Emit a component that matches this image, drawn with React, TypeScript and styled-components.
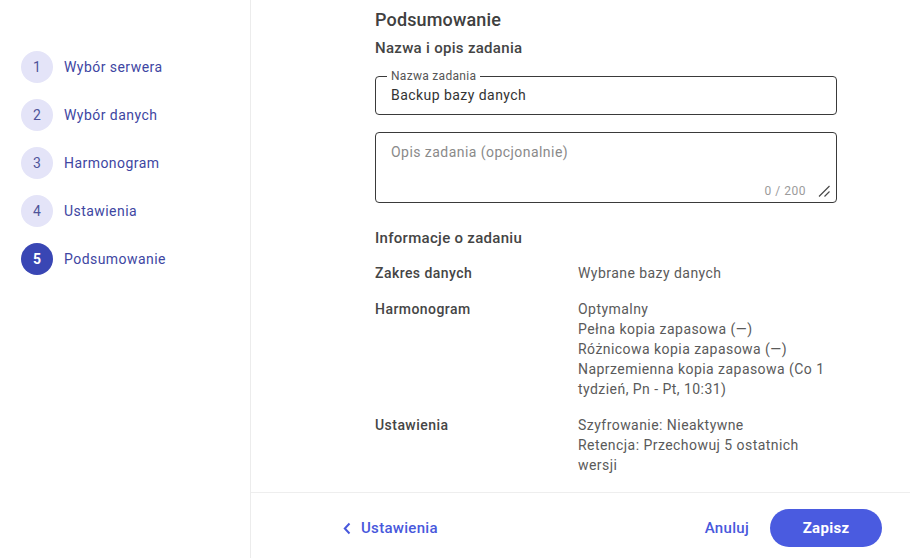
import React from "react";
import styled, { createGlobalStyle } from "styled-components";

const GlobalStyle = createGlobalStyle`
  html, body {
    margin: 0;
    padding: 0;
    background: #ffffff;
  }
  body {
    font-family: Roboto, "Noto Sans", Arial, sans-serif;
    color: #424242;
  }
  #root {
    height: 100vh;
  }
  * {
    box-sizing: border-box;
  }
`;

const Layout = styled.div`
  display: grid;
  grid-template-columns: 251px 1fr;
  height: 558px;
  overflow: hidden;
`;

const Sidebar = styled.nav`
  border-right: 1px solid #ececec;
  padding: 51px 0 0 21px;
  display: flex;
  flex-direction: column;
  gap: 16px;
`;

const Step = styled.div`
  display: flex;
  align-items: center;
  gap: 11px;
  height: 32px;
`;

const StepCircle = styled.span<{ $active?: boolean }>`
  width: 32px;
  height: 32px;
  border-radius: 50%;
  display: flex;
  align-items: center;
  justify-content: center;
  font-size: 14px;
  font-weight: ${(p) => (p.$active ? 700 : 400)};
  background: ${(p) => (p.$active ? "#3946b4" : "#e4e4f8")};
  color: ${(p) => (p.$active ? "#ffffff" : "#4f549a")};
`;

const StepLabel = styled.span`
  font-size: 14px;
  letter-spacing: 0.45px;
  color: #3e46a2;
`;

const Main = styled.div`
  display: flex;
  flex-direction: column;
  min-width: 0;
`;

const Content = styled.div`
  flex: 1;
  overflow: hidden;
  padding: 8px 0 0 124px;
`;

const Column = styled.div`
  width: 462px;
  display: flex;
  flex-direction: column;
`;

const Title = styled.h1`
  margin: 0;
  font-size: 18px;
  line-height: 24px;
  font-weight: 500;
  letter-spacing: 0.15px;
  color: #404040;
`;

const SectionTitle = styled.h2<{ $top: number }>`
  margin: ${(p) => p.$top}px 0 0;
  font-size: 15px;
  line-height: 20px;
  font-weight: 500;
  letter-spacing: 0.3px;
  color: #444444;
`;

const Field = styled.fieldset`
  margin: 11px 0 0;
  padding: 0 11px 7px;
  border: 1px solid #3a3a3a;
  border-radius: 4px;
  min-width: 0;
`;

const Legend = styled.legend`
  padding: 0 4px;
  font-size: 12px;
  line-height: 14px;
  color: #555555;
  letter-spacing: 0.3px;
`;

const TextInput = styled.input`
  display: block;
  width: 100%;
  height: 24px;
  border: none;
  outline: none;
  padding: 0 4px;
  font-family: inherit;
  font-size: 14px;
  letter-spacing: 0.45px;
  color: #333333;
  background: transparent;
`;

const AreaBox = styled.div`
  margin-top: 17px;
  height: 71px;
  border: 1px solid #3a3a3a;
  border-radius: 4px;
  padding: 9px 6px 3px 15px;
  display: flex;
  flex-direction: column;
`;

const TextArea = styled.textarea`
  height: 41px;
  border: none;
  outline: none;
  resize: none;
  padding: 0;
  font-family: inherit;
  font-size: 14px;
  line-height: 20px;
  letter-spacing: 0.45px;
  color: #333333;
  background: transparent;
  &::placeholder {
    color: #8a8a8a;
  }
`;

const AreaFooter = styled.div`
  display: flex;
  justify-content: flex-end;
  align-items: center;
  gap: 12px;
  height: 16px;
`;

const Counter = styled.span`
  font-size: 12px;
  color: #9b9b9b;
  letter-spacing: 0.5px;
`;

const InfoGrid = styled.dl`
  margin: 15px 0 0;
  display: grid;
  grid-template-columns: 203px 1fr;
  row-gap: 16px;
  font-size: 14px;
  line-height: 20px;
  letter-spacing: 0.45px;
`;

const InfoLabel = styled.dt`
  font-weight: 500;
  color: #454545;
`;

const InfoValue = styled.dd`
  margin: 0;
  color: #5a5a5a;
`;

const Footer = styled.footer`
  height: 66px;
  border-top: 1px solid #eeeeee;
  display: flex;
  align-items: center;
  padding: 5px 28px 0 92px;
`;

const LinkButton = styled.button`
  display: inline-flex;
  align-items: center;
  gap: 10px;
  border: none;
  background: none;
  padding: 0;
  font-family: inherit;
  font-size: 15px;
  font-weight: 500;
  letter-spacing: 0.3px;
  color: #4858dc;
  cursor: pointer;
`;

const Spacer = styled.div`
  flex: 1;
`;

const PrimaryButton = styled.button`
  margin-left: 21px;
  width: 112px;
  height: 38px;
  border: none;
  border-radius: 19px;
  background: #4a5be0;
  color: #ffffff;
  font-family: inherit;
  font-size: 15px;
  font-weight: 700;
  letter-spacing: 0.3px;
  cursor: pointer;
`;

const steps = [
  "Wybór serwera",
  "Wybór danych",
  "Harmonogram",
  "Ustawienia",
  "Podsumowanie",
];

const info: { label: string; lines: string[] }[] = [
  { label: "Zakres danych", lines: ["Wybrane bazy danych"] },
  {
    label: "Harmonogram",
    lines: [
      "Optymalny",
      "Pełna kopia zapasowa (—)",
      "Różnicowa kopia zapasowa (—)",
      "Naprzemienna kopia zapasowa (Co 1 tydzień, Pn - Pt, 10:31)",
    ],
  },
  {
    label: "Ustawienia",
    lines: ["Szyfrowanie: Nieaktywne", "Retencja: Przechowuj 5 ostatnich wersji"],
  },
];

const ResizeHandle = () => (
  <svg width="12" height="12" viewBox="0 0 12 12">
    <path d="M1 11.5 L11.5 1 M6.5 11.5 L11.5 6.5" stroke="#4a4a4a" strokeWidth="1.2" fill="none" />
  </svg>
);

const ChevronLeft = () => (
  <svg width="8" height="13" viewBox="0 0 8 13">
    <path d="M6.5 1.5 L1.8 6.5 L6.5 11.5" stroke="#4858dc" strokeWidth="2" fill="none" />
  </svg>
);

export default function App() {
  return (
    <>
      <GlobalStyle />
      <Layout>
        <Sidebar>
          {steps.map((s, i) => (
            <Step key={s}>
              <StepCircle $active={i === steps.length - 1}>{i + 1}</StepCircle>
              <StepLabel>{s}</StepLabel>
            </Step>
          ))}
        </Sidebar>
        <Main>
          <Content>
            <Column>
              <Title>Podsumowanie</Title>
              <SectionTitle $top={6}>Nazwa i opis zadania</SectionTitle>
              <Field>
                <Legend>Nazwa zadania</Legend>
                <TextInput defaultValue="Backup bazy danych" />
              </Field>
              <AreaBox>
                <TextArea placeholder="Opis zadania (opcjonalnie)" />
                <AreaFooter>
                  <Counter>0 / 200</Counter>
                  <ResizeHandle />
                </AreaFooter>
              </AreaBox>
              <SectionTitle $top={25}>Informacje o zadaniu</SectionTitle>
              <InfoGrid>
                {info.map((row) => (
                  <React.Fragment key={row.label}>
                    <InfoLabel>{row.label}</InfoLabel>
                    <InfoValue>
                      {row.lines.map((l) => (
                        <div key={l}>{l}</div>
                      ))}
                    </InfoValue>
                  </React.Fragment>
                ))}
              </InfoGrid>
            </Column>
          </Content>
          <Footer>
            <LinkButton>
              <ChevronLeft />
              Ustawienia
            </LinkButton>
            <Spacer />
            <LinkButton>Anuluj</LinkButton>
            <PrimaryButton>Zapisz</PrimaryButton>
          </Footer>
        </Main>
      </Layout>
    </>
  );
}
